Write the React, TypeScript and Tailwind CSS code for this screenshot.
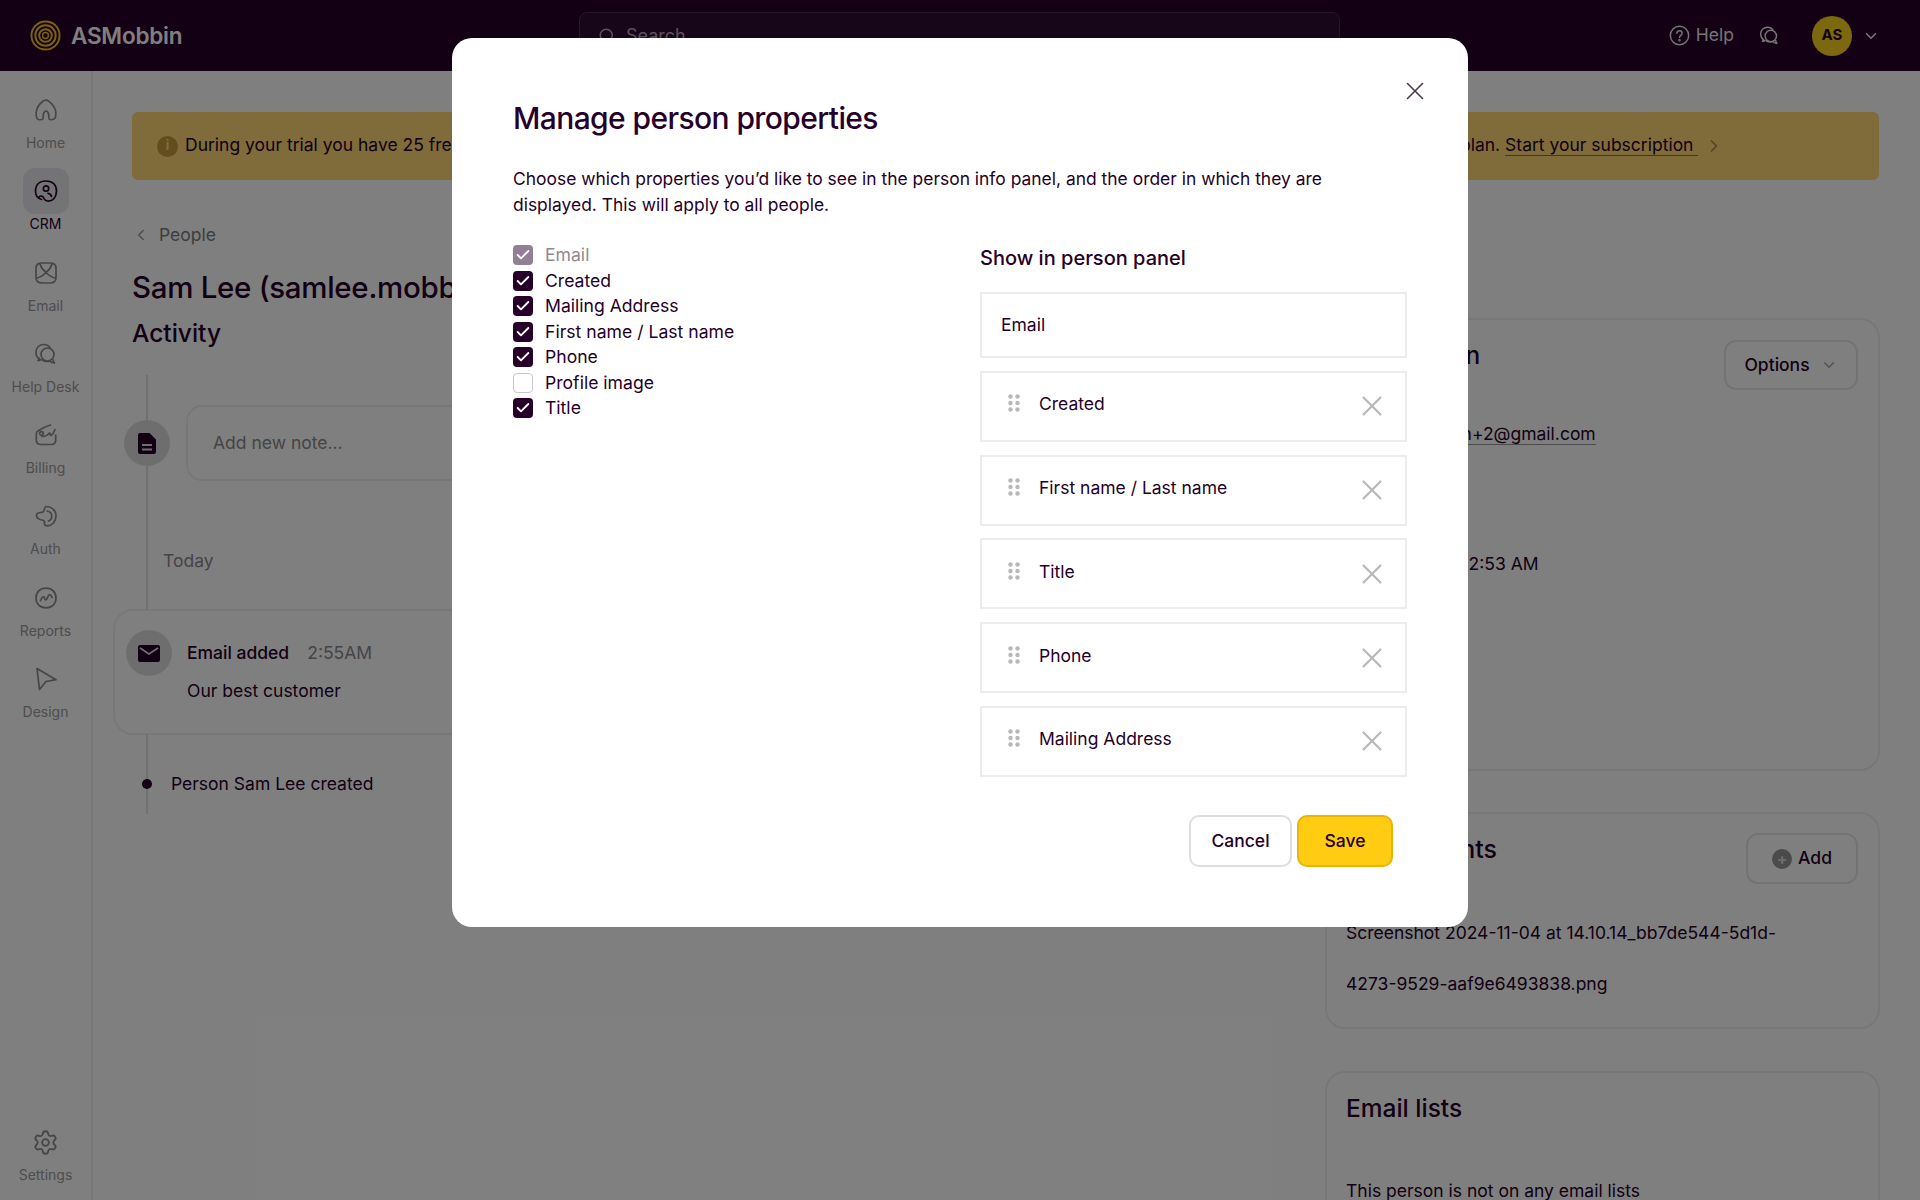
import React from 'react';
import { ChevronDown, ChevronLeft, ChevronRight, Search, Check, X, Settings } from 'lucide-react';

const strokeProps = {
  fill: 'none',
  stroke: 'currentColor',
  strokeWidth: 1.7,
  strokeLinecap: 'round' as const,
  strokeLinejoin: 'round' as const,
};

const ChatIcon = ({ size = 24 }: { size?: number }) => (
  <svg width={size} height={size} viewBox="0 0 24 24" {...strokeProps}>
    <path d="M5 16.500C2.500 15 1.800 12 2 9.500 2.300 5.500 5.500 2.500 9.500 2.500c3 0 5.500 1.300 6.700 3.500" />
    <circle cx="13.500" cy="12.500" r="6.500" />
    <path d="M5 16.500c-.2 1-.5 1.600-1 2 1.300.2 2.300-.2 3-1M19 17.500c.2 1.500.6 2.700 1.500 3.500-1.800 0-3.500-.6-4.500-2-2 .6-5.500.6-7.500-.8" />
  </svg>
);

const navItems: { label: string; active?: boolean; icon: React.ReactNode }[] = [
  {
    label: 'Home',
    icon: (
      <svg width="24" height="24" viewBox="0 0 24 24" {...strokeProps}>
        <path d="M4.500 21.500C2.800 21 2 18 2.200 14.500 2.500 10 5.500 6 8.500 3.500c2-1.800 4.500-1.800 6.500-.2 3.500 2.700 6.500 6.500 6.800 11 .2 3.500-.8 6.500-2.300 7-1.500.5-3.500.5-4.300-.3-.7-.8-.2-3-.5-4.500-.4-2-1.500-3.500-2.700-3.500s-2.300 1.500-2.700 3.500c-.3 1.500.2 3.700-.5 4.500-.8.800-2.800.8-4.300.500z" />
      </svg>
    ),
  },
  {
    label: 'CRM',
    active: true,
    icon: (
      <svg width="24" height="24" viewBox="0 0 24 24" {...strokeProps}>
        <path d="M7.500 20.500C3.500 19.500 1.500 16 1.500 12c0-6 3.500-10 10.500-10s10.500 4 10.500 10c0 6-3.500 10.500-9 10-2-.2-3-1.200-3.500-2.500-.5-1.500-1.500-2.500-3-2.500-.8 0-1.300.3-1.800.8" />
        <circle cx="12" cy="9.500" r="2.700" />
        <path d="M17.500 17.500c-.3-1.700-1.500-3-3.500-3.200" />
      </svg>
    ),
  },
  {
    label: 'Email',
    icon: (
      <svg width="24" height="24" viewBox="0 0 24 24" {...strokeProps}>
        <path d="M8 2c-4 0-6 1.500-6 5.500v9C2 20.500 4 22 8 22h8c4 0 6-1.500 6-5.500v-9C22 3.500 20 2 16 2z" />
        <path d="M6 3c1 3.500 3.500 6.500 6 8.500 2.500-2 5-5 6-8.500M3 17c3-.5 6.500-3 9-5.500 2.500 2.500 6 5 9 5.500" />
      </svg>
    ),
  },
  { label: 'Help Desk', icon: <ChatIcon /> },
  {
    label: 'Billing',
    icon: (
      <svg width="24" height="24" viewBox="0 0 24 24" {...strokeProps}>
        <path d="M6 7C3.500 7.500 2.300 9 2.300 11.500V17c0 3 1.700 4.500 4.700 4.500h10c3 0 4.700-1.500 4.700-4.500v-5" />
        <path d="M5 7.500C8 5 12 3.500 16.500 2M8 13.500c3 0 5.500-1 7.500-3.500l1.500 2.500c1.500-1 3-3 4-6" />
        <circle cx="7.500" cy="10.500" r="1.800" />
      </svg>
    ),
  },
  {
    label: 'Auth',
    icon: (
      <svg width="24" height="24" viewBox="0 0 24 24" {...strokeProps}>
        <path d="M12.500 2.500c5 0 9.500 4 9.500 9.500s-4 9.800-8.500 9.800c-2.500 0-3.500-1.500-3-3 .5-1.300-.5-2.500-2.500-2.800-3-.5-5.500-2-5.500-4.500S5 8.500 7 8.500c1.500 0 2.500-.5 3-2 .5-2 .8-4 2.500-4z" />
        <path d="M13 7c3 .5 4.800 2.500 4.800 5.200 0 2.300-1.300 4-3.300 4.800" />
      </svg>
    ),
  },
  {
    label: 'Reports',
    icon: (
      <svg width="24" height="24" viewBox="0 0 24 24" {...strokeProps}>
        <path d="M12 2.200c6 0 10 4 10 9.800s-4 9.800-10 9.800S2 17.800 2 12 6 2.200 12 2.200z" />
        <path d="M6.500 14.500c1-2 2-4 3-4 1.200 0 1 3.500 2.300 3.500 1.500 0 2-5 3.700-5.500 1.200-.3 1.800 1.500 2.500 3" />
      </svg>
    ),
  },
  {
    label: 'Design',
    icon: (
      <svg width="24" height="24" viewBox="0 0 24 24" {...strokeProps}>
        <path d="M3 1.500l19 11.200-10 1.800-6.500 8z" />
      </svg>
    ),
  },
];

const NavItem = ({ label, active, icon }: { label: string; active?: boolean; icon: React.ReactNode }) => (
  <div className="flex h-[81.300px] w-full flex-col items-center">
    <div
      className={`flex h-[46px] w-[46px] items-center justify-center rounded-xl ${
        active ? 'bg-[#e8e6ea] text-[#260028]' : 'text-[#8e8a90]'
      }`}
    >
      {icon}
    </div>
    <span className={`text-[14px] leading-[20px] ${active ? 'text-[#260028]' : 'text-[#9c9a9e]'}`}>{label}</span>
  </div>
);

const Card = ({ className, children }: { className: string; children: React.ReactNode }) => (
  <div className={`rounded-[20px] border-2 border-[#f0eff1] px-[19px] ${className}`}>{children}</div>
);

const properties = [
  { name: 'Email', state: 'locked' },
  { name: 'Created', state: 'on' },
  { name: 'Mailing Address', state: 'on' },
  { name: 'First name / Last name', state: 'on' },
  { name: 'Phone', state: 'on' },
  { name: 'Profile image', state: 'off' },
  { name: 'Title', state: 'on' },
];

const panelRows = ['Created', 'First name / Last name', 'Title', 'Phone', 'Mailing Address'];

const Grip = () => (
  <svg width="12" height="18" viewBox="0 0 12 18" fill="#b8b8b8" className="shrink-0">
    <circle cx="2.500" cy="2.500" r="2.200" />
    <circle cx="9.500" cy="2.500" r="2.200" />
    <circle cx="2.500" cy="9" r="2.200" />
    <circle cx="9.500" cy="9" r="2.200" />
    <circle cx="2.500" cy="15.500" r="2.200" />
    <circle cx="9.500" cy="15.500" r="2.200" />
  </svg>
);

export default function App() {
  return (
    <div className="relative h-[1200px] w-[1920px] overflow-hidden bg-white font-['Inter',sans-serif] text-[17.500px] text-[#260028]">
      {/* top bar */}
      <header className="flex h-[71px] items-center bg-[#270029] pl-[30px] pr-[40px]">
        <svg width="31" height="31" viewBox="0 0 32 32" fill="none" stroke="#f5c518" className="shrink-0">
          <path d="M16 1.500c8 0 14.500 6 14.500 14.500S24 30.500 16 30.500 1.500 24 1.500 16 8 1.500 16 1.500z" strokeWidth="2" />
          <circle cx="16" cy="16" r="10.500" strokeWidth="2" />
          <circle cx="16" cy="16" r="6.500" strokeWidth="2" />
          <circle cx="16" cy="16" r="3" strokeWidth="1.500" />
        </svg>
        <span className="ml-[10px] w-[508px] text-[22.500px] font-semibold tracking-[-0.2px] text-white">ASMobbin</span>
        <div className="flex h-[48px] w-[761px] items-center rounded-lg border border-[#4a3050] bg-[#2f0a33] pl-[18px] text-[#b0a4b4]">
          <Search size={18} />
          <span className="ml-[10px] text-[18px]">Search</span>
        </div>
        <div className="ml-auto flex items-center text-[#e8e6ea]">
          <svg width="21" height="21" viewBox="0 0 24 24" fill="none" stroke="currentColor" strokeWidth="1.700" strokeLinecap="round">
            <circle cx="12" cy="12" r="10.500" />
            <path d="M9 9.500C9 7.500 10.500 6.500 12 6.500s3 1 3 2.800c0 2.500-3 2.500-3 5" />
            <circle cx="12" cy="17.500" r=".6" />
          </svg>
          <span className="ml-[6px] text-[17.500px]">Help</span>
          <span className="ml-[25px]"><ChatIcon size={21} /></span>
          <div className="ml-[32px] flex h-[40px] w-[40px] items-center justify-center rounded-full bg-[#f9d21f] text-[15px] font-bold text-[#260028]">
            AS
          </div>
          <ChevronDown size={18} strokeWidth={2.200} className="ml-[10px]" />
        </div>
      </header>

      <div className="flex h-[1129px]">
        {/* side nav */}
        <nav className="flex w-[93px] shrink-0 flex-col items-center border-r-2 border-[#efeef0] pt-[16px]">
          {navItems.map((item) => (
            <NavItem key={item.label} {...item} />
          ))}
          <div className="mt-auto flex w-full flex-col items-center pb-[15px] text-[#8e8a90]">
            <Settings size={27} strokeWidth={1.600} />
            <span className="mt-[9px] text-[14px] leading-[20px] text-[#9c9a9e]">Settings</span>
          </div>
        </nav>

        {/* page content */}
        <main className="min-w-0 flex-1 pl-[39px] pr-[41px] pt-[41px]">
          <div className="flex h-[68px] items-center rounded-md bg-[#fed874] pl-[25px]">
            <span className="flex h-[21px] w-[21px] shrink-0 items-center justify-center rounded-full bg-[#c79a3e] text-[13px] font-bold text-[#fed874]">i</span>
            <span className="mb-[2px] ml-[7px] w-[1275px] whitespace-nowrap">During your trial you have 25 free</span>
            <span className="mb-[2px] whitespace-nowrap">
              plan.{' '}
              <a className="border-b border-[#8a7040] pr-[5px]">Start your subscription</a>
            </span>
            <ChevronRight size={20} className="ml-[6px] text-[#a88a48]" />
          </div>

          <div className="mt-[41px] flex h-[28px] items-center text-[#7a7a7c]">
            <ChevronLeft size={18} className="text-[#9c9a9e]" />
            <span className="ml-[9px]">People</span>
          </div>
          <h1 className="mt-[19px] h-[38px] whitespace-nowrap text-[29.500px] font-medium leading-[38px] tracking-[-0.3px]">Sam Lee (samlee.mobbin+2@gmail.com)</h1>

          <div className="mt-[12px] grid grid-cols-[1152px_555px] gap-x-[41px]">
            <section>
              <h2 className="mt-[1px] h-[28px] text-[24.500px] font-medium leading-[28px]">Activity</h2>
              <div className="ml-[14px] mt-[28px] border-l-2 border-[#e0dfe2] pb-[16px] pt-[30px]">
                <div className="flex items-center">
                  <div className="ml-[-24px] flex h-[46px] w-[46px] shrink-0 items-center justify-center rounded-full bg-[#dedcdf]">
                    <svg width="18" height="21" viewBox="0 0 18 21" fill="currentColor">
                      <path fillRule="evenodd" d="M2 0h9.500L18 6.500V19a2 2 0 0 1-2 2H2a2 2 0 0 1-2-2V2a2 2 0 0 1 2-2zm2 11v2h10v-2zm0 4.500v2h10v-2z" />
                    </svg>
                  </div>
                  <div className="ml-[16px] flex h-[76px] flex-1 items-center rounded-2xl border-2 border-[#f0eff1] pl-[25px] text-[#8a888c]">Add new note...</div>
                </div>
                <div className="ml-[15px] mt-[66px] h-[28px] leading-[28px] text-[#8a888c]">Today</div>
                <div className="ml-[-35px] mt-[34px] flex h-[126px] items-start rounded-[20px] border-2 border-[#f0eff1] bg-white pl-[11px] pt-[19px]">
                  <div className="flex h-[46px] w-[46px] shrink-0 items-center justify-center rounded-full bg-[#dedcdf]">
                    <svg width="22" height="17" viewBox="0 0 22 17">
                      <rect width="22" height="17" rx="2" fill="#260028" />
                      <path d="M2 3l9 6 9-6" fill="none" stroke="#dedcdf" strokeWidth="1.600" />
                    </svg>
                  </div>
                  <div className="ml-[15px]">
                    <div className="flex h-[46px] items-center">
                      <span className="font-medium">Email added</span>
                      <span className="ml-[18px] text-[#8a888c]">2:55AM</span>
                    </div>
                    <div className="mt-[1px] leading-[28px]">Our best customer</div>
                  </div>
                </div>
                <div className="mt-[35px] flex h-[28px] items-center">
                  <div className="ml-[-6px] h-[10px] w-[10px] rounded-full bg-[#260028]" />
                  <span className="ml-[19px]">Person Sam Lee created</span>
                </div>
              </div>
            </section>

            <aside>
              <Card className="h-[453px] pt-[20px]">
                <div className="flex items-start justify-between">
                  <h3 className="mt-[1px] text-[24.500px] font-medium leading-[28px]">Information</h3>
                  <div className="mr-[1px] flex h-[50px] w-[134px] items-center justify-center rounded-xl border-2 border-[#e6e5e8]">
                    <span className="font-medium">Options</span>
                    <ChevronDown size={18} className="ml-[10px] text-[#a8a6aa]" />
                  </div>
                </div>
                <div className="mt-[30px] leading-[28px]">
                  <a className="border-b border-[#999]">samlee.mobbin+2@gmail.com</a>
                </div>
                <div className="mt-[102px] leading-[28px]">Nov 4, 2024, 02:53 AM</div>
              </Card>
              <Card className="mt-[41px] h-[217px] pt-[19px]">
                <div className="flex items-start justify-between">
                  <h3 className="mt-[2px] text-[25px] font-medium leading-[28px]">Attachments</h3>
                  <div className="mr-[1px] flex h-[51px] w-[112px] items-center justify-center rounded-xl border-2 border-[#e6e5e8]">
                    <span className="flex h-[20px] w-[20px] items-center justify-center rounded-full bg-[#999799] text-[16px] font-semibold leading-none text-[#dedcdf]">+</span>
                    <span className="ml-[6px] font-medium">Add</span>
                  </div>
                </div>
                <p className="mt-[23px] leading-[51px]">
                  Screenshot 2024-11-04 at 14.10.14_bb7de544-5d1d-
                  <br />
                  4273-9529-aaf9e6493838.png
                </p>
              </Card>
              <Card className="mt-[42px] h-[300px] pt-[19px]">
                <h3 className="text-[24.500px] font-medium leading-[32px]">Email lists</h3>
                <p className="mt-[53px] leading-[28px]">This person is not on any email lists</p>
              </Card>
            </aside>
          </div>
        </main>
      </div>

      {/* modal */}
      <div className="absolute inset-0 flex justify-center bg-black/50 pt-[38px]">
        <div className="relative h-[889px] w-[1016px] rounded-[20px] bg-white pl-[61px] pt-[62px]">
          <button className="absolute right-[38px] top-[38px] text-[#4a3a50]">
            <X size={30} strokeWidth={1.300} />
          </button>
          <h2 className="text-[30px] font-[450] leading-[36px] tracking-[-0.6px]">Manage person properties</h2>
          <p className="mt-[30px] w-[840px] text-[17.450px] leading-[26px]">
            Choose which properties you’d like to see in the person info panel, and the order in which they are displayed. This will apply to all people.
          </p>
          <div className="mt-[27px] flex">
            <div className="w-[467px] shrink-0">
              {properties.map((p) => (
                <div key={p.name} className="flex h-[25.500px] items-start">
                  <span
                    className={`flex h-[20px] w-[20px] items-center justify-center rounded-[4px] ${
                      p.state === 'on'
                        ? 'bg-[#260028] text-white'
                        : p.state === 'locked'
                          ? 'bg-[#937f95] text-white'
                          : 'border border-[#c9c7cb]'
                    }`}
                  >
                    {p.state !== 'off' && <Check size={16} strokeWidth={2.800} />}
                  </span>
                  <span className={`ml-[12px] text-[17.600px] leading-[20px] ${p.state === 'locked' ? 'text-[#8f8a92]' : ''}`}>{p.name}</span>
                </div>
              ))}
            </div>
            <div className="w-[427px]">
              <h3 className="text-[20px] font-medium leading-[26px]">Show in person panel</h3>
              <div className="mt-[21px] flex h-[66px] items-center border-2 border-[#ececec] pl-[19px]">Email</div>
              {panelRows.map((row) => (
                <div key={row} className="mt-[12.800px] flex h-[71px] items-center border-2 border-[#ececec] pl-[26px] pr-[16px]">
                  <span className="mb-[6px]"><Grip /></span>
                  <span className="mb-[4px] ml-[19px]">{row}</span>
                  <X size={34} strokeWidth={1.500} className="ml-auto text-[#b8b8b8]" />
                </div>
              ))}
              <div className="mt-[38px] flex justify-end gap-[5px] pr-[14px]">
                <button className="h-[52px] w-[103px] rounded-[10px] border-2 border-[#dedde0] bg-white font-medium">Cancel</button>
                <button className="h-[52px] w-[96px] rounded-[10px] border-2 border-[#eab308] bg-[#ffcc12] font-medium">Save</button>
              </div>
            </div>
          </div>
        </div>
      </div>
    </div>
  );
}
